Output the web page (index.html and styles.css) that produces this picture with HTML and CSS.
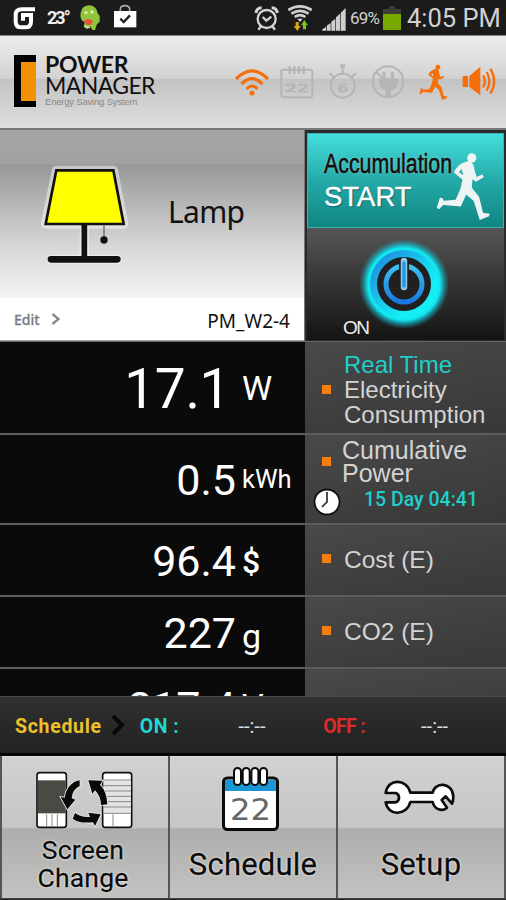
FILE: index.html
```html
<!DOCTYPE html>
<html lang="en">
<head>
    <meta charset="UTF-8">
    <meta name="viewport" content="width=device-width, initial-scale=1.0">
    <title>Power Manager</title>
    <link rel="stylesheet" href="styles.css">
</head>
<body>
    <svg width="0" height="0" class="defs">
        <symbol id="runner" viewBox="408 70 166 208">
            <circle cx="516" cy="88" r="14"/>
            <path d="M486 104L508 96Q524 104 524 124L531 145L548 137L552 146L528 160L518 152L516 178L538 205L550 253L570 256L568 264L540 275L522 218L499 198L483 234L430 230L417 243L410 238L420 207L429 210L431 217L467 214L482 180L488 153L462 132Q464 120 486 104ZM485 121L477 131L491 140Z" fill-rule="evenodd"/>
        </symbol>
    </svg>

    <div class="statusbar">
        <div class="status-left">
            <svg class="ic-sigma" width="22" height="24" viewBox="38 18 66 72" fill="none" stroke="#fff" stroke-width="12">
                <path d="M104 28H64Q46 28 46 45V65Q46 82 64 82H74Q92 82 92 65V45H68V62"/>
            </svg>
            <span class="temp">23°</span>
            <svg class="ic-droid" width="22" height="28" viewBox="238 12 66 84">
                <path d="M243 38Q247 16 270 16Q290 18 293 38L300 48V66L292 72L286 90H278L272 80L262 88L252 80L255 66Q239 60 243 38Z" fill="#8fc53c"/>
                <circle cx="259" cy="38" r="5" fill="#d9efa8"/><circle cx="277" cy="36" r="5" fill="#d9efa8"/>
                <path d="M252 62L266 56L280 62L274 74L262 76Z" fill="#e8503c"/>
                <path d="M255 78L270 84" stroke="#eee" stroke-width="4"/>
            </svg>
            <svg class="ic-bag" width="24" height="26" viewBox="338 12 72 78">
                <path d="M360 34V28Q360 17 374 17Q388 17 388 28V34" fill="none" stroke="#aaa" stroke-width="5"/>
                <path d="M341 33H408V82H341Z" fill="#fff"/>
                <path d="M360 56L370 66L389 46" fill="none" stroke="#222" stroke-width="7"/>
            </svg>
        </div>
        <div class="status-right">
            <svg width="26" height="26" viewBox="3 14 78 78" fill="none" stroke="#d4d4d4" stroke-width="7">
                <circle cx="41" cy="56" r="27"/>
                <path d="M29 50L40 61L55 49M24 78L16 88M58 78L66 88"/>
                <path d="M9 38Q11 22 26 22M73 38Q71 22 56 22" stroke-width="9"/>
            </svg>
            <svg class="ic-net" width="26" height="28" viewBox="102 10 78 84" fill="none" stroke="#cfcfcf" stroke-width="8">
                <path d="M106 28Q141 6 176 28M115 39Q141 22 167 39M125 49Q141 38 157 49"/>
                <path d="M133 54H149L141 64Z" fill="#ddd" stroke="none"/>
                <path d="M128 64H137V76H143L133 91L122 76H128Z" fill="#e0a21c" stroke="none"/>
                <path d="M150 86H159V74H165L154 58L144 74H150Z" fill="#7fc31c" stroke="none"/>
            </svg>
            <svg class="ic-signal" width="24" height="24" viewBox="206 22 72 72" fill="#cfcfcf">
                <path d="M207 93V89L218 82V93ZM220 93V78L232 70V93ZM234 93V66L246 57V93ZM248 93V53L260 42V93ZM262 93V40L277 25V93Z"/>
            </svg>
            <span class="percent">69%</span>
            <svg class="ic-battery" width="18" height="26" viewBox="0 0 18 26">
                <path d="M6 1H12V4H18V9H0V4H6Z" fill="#3b3d38"/>
                <rect y="9" width="18" height="16" fill="#76a800"/>
            </svg>
            <span class="clock">4:05 PM</span>
        </div>
    </div>

    <header>
        <div class="logo">
            <div class="logo-mark"></div>
            <div>
                <div class="logo-power">POWER</div>
                <div class="logo-manager">MANAGER</div>
                <div class="logo-sub">Energy Saving System</div>
            </div>
        </div>
        <div class="indicators">
            <svg width="36" height="38" viewBox="0 0 36 38" fill="none" stroke="#f36f0e" stroke-width="3.2">
                <path d="M2 16Q18 0 34 16M7.500 21Q18 10.500 28.500 21M12.500 26Q18 20 23.500 26"/>
                <circle cx="18" cy="30" r="2.500" fill="#f36f0e" stroke="none"/>
            </svg>
            <svg width="36" height="38" viewBox="80 189 108 114" fill="none" stroke="#b5b5b5" stroke-width="6">
                <rect x="87" y="209" width="93" height="83" rx="6"/>
                <path d="M112 199V222M126 199V222M140 199V222M154 199V222" stroke-width="7"/>
                <text x="98" y="277" textLength="72" lengthAdjust="spacingAndGlyphs" class="cal-small">22</text>
            </svg>
            <svg width="36" height="38" viewBox="214 189 108 114" fill="none" stroke="#b5b5b5" stroke-width="6">
                <circle cx="267" cy="257" r="36"/>
                <path d="M267 222V208M227 220L241 232M307 220L293 232"/>
                <path d="M260 199H274" stroke-width="12"/>
                <text x="251" y="275" textLength="34" lengthAdjust="spacingAndGlyphs" class="cal-small">6</text>
            </svg>
            <svg width="36" height="38" viewBox="348 189 108 114" fill="none" stroke="#b5b5b5" stroke-width="6">
                <circle cx="402" cy="245" r="46"/>
                <path d="M390 215V235M415 215V235" stroke-width="9"/>
                <path d="M375 235H432V249Q429 268 411 272V288H395V272Q377 266 375 249Z" fill="#b5b5b5" stroke="none"/>
                <path d="M366 215L386 234"/>
            </svg>
            <svg width="36" height="38" viewBox="0 0 36 38" fill="#f86e08">
                <use href="#runner" x="3" y="1" width="29" height="36.500"/>
            </svg>
            <svg width="36" height="38" viewBox="624 189 108 114" fill="none" stroke="#f86e08" stroke-width="7">
                <path d="M629 228H645V261H629ZM649 228L682 200V286L649 261Z" fill="#f86e08" stroke="none"/>
                <path d="M690 226Q701 244 690 262M701 216Q717 244 701 272M712 206Q735 244 712 281"/>
            </svg>
        </div>
    </header>

    <section class="device">
        <div class="device-info">
            <div class="device-name">
                <svg width="90" height="110" viewBox="120 105 270 330">
                    <path class="glow" d="M169 127H340L371 288H137ZM253 288V390M155 394H352"/>
                    <path d="M169 127H340L371 288H137Z" fill="#ff0" stroke="#111" stroke-width="8"/>
                    <path d="M253 290V392" stroke="#111" stroke-width="17"/>
                    <path d="M153 394H352" stroke="#111" stroke-width="20" stroke-linecap="round"/>
                    <path d="M312 290V330" stroke="#666" stroke-width="4"/>
                    <circle cx="312" cy="336" r="11" fill="#111"/>
                </svg>
                <span>Lamp</span>
            </div>
            <div class="device-edit">
                <span class="edit">Edit</span>
                <svg width="10" height="14" viewBox="0 0 10 14"><path d="M1.500 2L7.500 7L1.500 12" fill="none" stroke="#8b8b8b" stroke-width="2.400"/></svg>
                <span class="device-id">PM_W2-4</span>
            </div>
        </div>
        <div class="device-actions">
            <div class="accumulation">
                <div class="acc-text">
                    <div class="acc-title">Accumulation</div>
                    <div class="acc-start">START</div>
                </div>
                <svg class="acc-runner" width="55" height="69" fill="#eef4f4"><use href="#runner" width="55" height="69"/></svg>
            </div>
            <div class="power">
                <span>ON</span>
                <svg width="96" height="96" viewBox="-48 -48 96 96" fill="none">
                    <defs>
                        <radialGradient id="halo"><stop offset=".8" stop-color="#12e8f2"/><stop offset=".88" stop-color="#12cfe0" stop-opacity=".6"/><stop offset="1" stop-color="#12aebc" stop-opacity="0"/></radialGradient>
                        <linearGradient id="ring" x1="0" y1="0" x2="1" y2="1"><stop offset=".1" stop-color="#1f8fe0"/><stop offset=".7" stop-color="#16eef5"/></linearGradient>
                        <linearGradient id="inner" x1="0" y1="0" x2="0" y2="1"><stop offset="0" stop-color="#3bc2ee"/><stop offset="1" stop-color="#1979e0"/></linearGradient>
                    </defs>
                    <circle r="45" fill="url(#halo)"/>
                    <circle r="34" fill="url(#ring)"/>
                    <circle r="27" fill="#211f20"/>
                    <circle r="18" stroke="url(#inner)" stroke-width="5"/>
                    <path d="M0 -23V3" stroke="#211f20" stroke-width="10"/>
                    <path d="M0 -23V3" stroke="#8ccbe8" stroke-width="6.500" stroke-linecap="round"/>
                    <path d="M0 -21V2" stroke="#239ae6" stroke-width="3.500" stroke-linecap="round"/>
                </svg>
            </div>
        </div>
    </section>

    <section class="readings">
        <div class="row row-power">
            <div class="value"><b>17.1</b><i>W</i></div>
            <div class="label"><span><em>Real Time</em><br>Electricity<br>Consumption</span></div>
        </div>
        <div class="row row-energy">
            <div class="value"><b>0.5</b><i>kWh</i></div>
            <div class="label">
                <span>Cumulative<br>Power</span>
                <div class="elapsed">
                    <svg width="28" height="28" viewBox="0 0 28 28">
                        <circle cx="14" cy="14" r="12.500" fill="#fff" stroke="#111" stroke-width="1.800"/>
                        <path d="M14 4V14L9 19" fill="none" stroke="#222" stroke-width="1.600"/>
                    </svg>
                    <span>15 Day 04:41</span>
                </div>
            </div>
        </div>
        <div class="row row-cost">
            <div class="value"><b>96.4</b><i>$</i></div>
            <div class="label"><span>Cost (E)</span></div>
        </div>
        <div class="row">
            <div class="value"><b>227</b><i>g</i></div>
            <div class="label"><span>CO2 (E)</span></div>
        </div>
        <div class="row row-volt">
            <div class="value"><b>217.4</b><i>V</i></div>
            <div class="label"></div>
        </div>
    </section>

    <div class="schedule">
        <span class="sch-title">Schedule</span>
        <svg width="16" height="22" viewBox="0 0 16 22"><path d="M2 2L11 11L2 20" fill="none" stroke="#090909" stroke-width="4"/></svg>
        <span class="sch-on">ON :</span>
        <span class="sch-time">--:--</span>
        <span class="sch-off">OFF :</span>
        <span class="sch-time">--:--</span>
    </div>

    <nav>
        <a href="#" class="two-line">
            <svg width="98" height="58" viewBox="110 64 294 174">
                <g stroke="#111" stroke-width="5">
                    <rect x="113" y="69" width="88" height="164" rx="8" fill="#fff"/>
                    <rect x="310" y="69" width="87" height="164" rx="8" fill="#fff"/>
                </g>
                <path d="M116 92H199V191H116Z" fill="#484b43"/>
                <path d="M142 194V230M158 194V230M174 194V230M341 194V230" stroke="#888" stroke-width="3"/>
                <path d="M313 92H395V191H313Z" fill="#e4e4e4"/>
                <path d="M313 91H395M313 108H395M313 124H395M313 140H395M313 156H395M313 172H395M313 191H395" stroke="#888" stroke-width="3"/>
                <g fill="#090909" stroke="#eceadb" stroke-width="5" paint-order="stroke">
                    <path d="M241 92V109Q220 119 217 145L228 150L204 179L184 142L196 144Q203 100 241 92Z"/>
                    <path d="M267 92L310 93L302 105Q323 126 324 164L305 166Q304 139 287 122L279 132Z"/>
                    <path d="M227 190Q246 204 272 202L267 189L304 194L287 229L281 218Q239 222 220 207Z"/>
                </g>
            </svg>
            <span>Screen<br>Change</span>
        </a>
        <a href="#">
            <svg width="60" height="66" viewBox="0 0 60 66">
                <rect x="2.500" y="11" width="54" height="51.500" rx="4" fill="#fff" stroke="#0b0b0b" stroke-width="3"/>
                <path d="M4 13H55V24H4Z" fill="#1b96d4"/>
                <g fill="#fff" stroke="#0b0b0b" stroke-width="2"><rect x="13" y="1" width="7" height="17" rx="3.500"/><rect x="21.700" y="1" width="7" height="17" rx="3.500"/><rect x="30.400" y="1" width="7" height="17" rx="3.500"/><rect x="39" y="1" width="7" height="17" rx="3.500"/></g>
                <text x="9" y="53" textLength="41" lengthAdjust="spacingAndGlyphs" class="cal-big">22</text>
            </svg>
            <span>Schedule</span>
        </a>
        <a href="#">
            <svg width="74" height="38" viewBox="390 88 222 114">
                <path d="M401 130C408 85 464 86 475 129H542C548 96 602 96 604 141Q604 152 600 162L581 140L569 151L585 174C570 187 547 180 542 157H475C464 200 408 200 401 158H431Q441 154 441 144Q441 133 431 130Z" fill="#fff" stroke="#0b0b0b" stroke-width="8" stroke-linejoin="round"/>
            </svg>
            <span>Setup</span>
        </a>
    </nav>
</body>
</html>
```
FILE: styles.css
```css
* {
    box-sizing: border-box;
}
body {
    margin: 0;
    width: 506px;
    height: 900px;
    overflow: hidden;
    background-color: #2b2b2b;
    font-family: Roboto, sans-serif;
    display: flex;
    flex-direction: column;
}
svg {
    display: block;
    flex-shrink: 0;
}
.defs {
    position: absolute;
}

/* status bar */
.statusbar {
    height: 35px;
    background-color: #1b1b1b;
    color: #d2d2d2;
    display: flex;
    justify-content: space-between;
    padding: 0 5px 0 13px;
}
.status-left, .status-right {
    display: flex;
    align-items: center;
}
.temp {
    width: 20px;
    margin-left: 12px;
    font-size: 18px;
    font-weight: bold;
    letter-spacing: -2px;
    color: #eee;
}
.ic-droid {
    margin-left: 12px;
}
.ic-bag {
    margin: 0 0 2px 12px;
}
.ic-net {
    margin-left: 7px;
}
.ic-signal {
    margin: 3px 0 0 9px;
}
.percent {
    margin: 0 2px 0 4px;
    width: 31px;
    font-size: 17px;
    letter-spacing: -0.8px;
}
.ic-battery {
    margin-top: 1px;
}
.clock {
    margin-left: 6px;
    width: 94px;
    font-size: 25.5px;
    white-space: nowrap;
}

/* header */
header {
    height: 95px;
    padding: 18px 9px 0 14px;
    border-top: 1px solid #888;
    border-bottom: 2px solid #777;
    background: linear-gradient(#ececec 0, #d2d2d2 46%, #c3c3c3 47%, #dedede 100%);
    display: flex;
    justify-content: space-between;
}
.logo {
    display: flex;
    gap: 9px;
}
.logo-mark {
    width: 22px;
    height: 52px;
    margin-top: 1px;
    background-color: #f39200;
    border: solid #000;
    border-width: 7px 0 6px 7px;
}
.logo-power, .logo-manager {
    font-family: Lato, sans-serif;
    font-size: 23px;
    line-height: 21px;
    color: #111;
}
.logo-power {
    font-weight: bold;
    letter-spacing: -0.3px;
}
.logo-manager {
    letter-spacing: -0.6px;
}
.logo-sub {
    font-family: "Liberation Sans", sans-serif;
    font-size: 9.5px;
    line-height: 11px;
    letter-spacing: -0.2px;
    color: #888;
}
.indicators {
    display: flex;
    gap: 9.4px;
    padding-top: 9px;
}
.cal-small {
    font: 34px "DejaVu Sans", sans-serif;
    fill: #b5b5b5;
    stroke-width: 2;
}

/* device */
.device {
    height: 211px;
    display: flex;
    background-color: #2a2a2a;
}
.device-info {
    width: 305px;
    border-right: 1px solid #777;
}
.device-name {
    height: 168px;
    padding: 33px 0 0 40px;
    background: linear-gradient(#a5a5a5 0, #a1a1a1 20%, #979797 21%, #b5b5b5 43%, #d8d8d8 70%, #f3f3f3 100%);
    display: flex;
    font-family: "Noto Sans", sans-serif;
    font-size: 30px;
    line-height: 40px;
    color: #111;
}
.device-name span {
    margin: 29px 0 0 38px;
    letter-spacing: -0.7px;
}
.glow {
    fill: none;
    stroke: #fff;
    stroke-opacity: 0.45;
    stroke-width: 28px;
    stroke-linejoin: round;
    stroke-linecap: round;
}
.device-edit {
    height: 43px;
    padding: 0 14px;
    background-color: #fff;
    border-bottom: 1px solid #aaa;
    display: flex;
    align-items: center;
    font-family: "Noto Sans", sans-serif;
}
.edit {
    width: 37px;
    font-size: 14px;
    color: #777d85;
    font-weight: 500;
    -webkit-text-stroke: 0.3px #777d85;
}
.device-id {
    margin-left: auto;
    margin-top: 3px;
    font-size: 19px;
    color: #111;
}
.device-actions {
    width: 201px;
    padding: 3px 2px 0;
}
.accumulation {
    height: 95px;
    padding: 17px 0 0 16px;
    border: 1px solid #35b5b2;
    background: linear-gradient(#45dfdc, #23aaa8 50%, #118683);
    position: relative;
    font-family: "Liberation Sans", sans-serif;
}
.acc-title {
    font-size: 27px;
    line-height: 27px;
    width: 163px;
    color: #111;
    -webkit-text-stroke: 0.7px #111;
    text-shadow: 0 0 2px #d8ffff;
    transform: scaleX(0.79);
    transform-origin: left;
}
.acc-start {
    margin-top: 5px;
    font-size: 27.5px;
    line-height: 27px;
    color: #fff;
    -webkit-text-stroke: 0.4px #fff;
    text-shadow: 1px 1px 1px #055;
}
.acc-runner {
    position: absolute;
    left: 128px;
    top: 18px;
}
.power {
    height: 112px;
    background: linear-gradient(#565656, #343434 50%, #141414);
    display: flex;
    align-items: center;
    justify-content: center;
    position: relative;
}
.power span {
    position: absolute;
    left: 36px;
    bottom: 1px;
    font-family: "Liberation Sans", sans-serif;
    font-size: 19px;
    letter-spacing: -1.5px;
    color: #eee;
    z-index: 1;
}
.power svg {
    margin-left: -3px;
}

/* readings */
.readings {
    height: 355px;
    overflow: hidden;
    border-top: 1px solid #666;
}
.row {
    height: 72px;
    display: flex;
    border-bottom: 2px solid #5d5d5d;
}
.row-power {
    height: 93px;
}
.row-energy {
    height: 90px;
}
.value {
    width: 305px;
    background-color: #0a0a0a;
    color: #fff;
    display: flex;
    align-items: baseline;
    line-height: 73px;
}
.value b {
    width: 236px;
    font-size: 43px;
    font-weight: 400;
    text-align: right;
}
.value i {
    margin-left: 6px;
    font-size: 34px;
    font-style: normal;
}
.row-power .value {
    line-height: 95px;
}
.row-power .value b {
    width: 230px;
    font-size: 55px;
    letter-spacing: -0.4px;
}
.row-power .value i {
    margin-left: 12px;
    position: relative;
    top: -8px;
}
.row-energy .value {
    line-height: 91px;
}
.row-energy .value i {
    font-size: 25.5px;
    position: relative;
    top: -7px;
}
.row-cost .value i {
    font-size: 32px;
    font-weight: 500;
    position: relative;
    top: -3px;
}
.row-volt .value {
    line-height: 77px;
}
.row-volt .value i {
    position: relative;
    top: -4px;
}
.label {
    flex: 1;
    padding-left: 39px;
    background: linear-gradient(170deg, #494949, #383838);
    color: #d3d3d3;
    font-family: "Liberation Sans", sans-serif;
    font-size: 24.5px;
    line-height: 69px;
    position: relative;
}
.label em {
    font-style: normal;
    color: #20cfcb;
}
.label::before {
    content: "";
    position: absolute;
    left: 17px;
    top: 29px;
    width: 9px;
    height: 9px;
    background-color: #f77f0b;
}
.row-power .label {
    padding-top: 10px;
    font-size: 24px;
    line-height: 25px;
}
.row-power .label::before {
    top: 43px;
}
.row-energy .label {
    padding: 4px 0 0 37px;
    font-size: 25px;
    line-height: 23px;
}
.row-energy .label::before {
    top: 22px;
}
.row-volt .label::before {
    display: none;
}
.elapsed {
    display: flex;
    align-items: center;
    margin: 3px 0 0 -29px;
    font-family: Roboto, sans-serif;
    font-size: 19.5px;
    font-weight: 500;
    color: #20cfcb;
}
.elapsed span {
    margin: -6px 0 0 23px;
}

/* schedule */
.schedule {
    height: 60px;
    padding: 0 0 0 15px;
    background: linear-gradient(#303030, #222);
    border-top: 1px solid #4c4c4c;
    border-bottom: 3px solid #050505;
    display: flex;
    align-items: center;
    font-size: 19.5px;
    font-weight: bold;
}
.sch-title {
    width: 97px;
    padding-top: 2px;
    letter-spacing: 0.7px;
    color: #ecc12c;
}
.sch-on {
    width: 100px;
    margin-left: 13px;
    padding-top: 2px;
    letter-spacing: 0.5px;
    color: #20d8d0;
}
.sch-off {
    width: 99px;
    padding-top: 2px;
    letter-spacing: -0.7px;
    color: #df2a2c;
}
.sch-time {
    width: 86px;
    padding-top: 2px;
    font-weight: 400;
    font-size: 20px;
    color: #ddd;
}

/* bottom menu */
nav {
    height: 143px;
    display: flex;
    padding: 0 2px;
    background-color: #555;
    gap: 2px;
    border-bottom: 1px solid #444;
}
nav a {
    flex: 1;
    display: flex;
    flex-direction: column;
    align-items: center;
    text-decoration: none;
    color: #0c0c0c;
    font-size: 31px;
    line-height: 36px;
    text-align: center;
    text-shadow: 0 0 2px #fff, 0 0 2px #fff;
    background: linear-gradient(#d1d1d1 0, #c6c6c6 50%, #adaeac 51%, #c3c4c1 100%);
    border-top: 1px solid #e0e0e0;
}
nav a svg {
    margin-top: 10px;
    margin-right: 4px;
}
nav a span {
    margin-top: 14px;
    letter-spacing: 0.2px;
    -webkit-text-stroke: 0.3px #0c0c0c;
}
nav a:last-child svg {
    margin-top: 22px;
}
nav a:last-child span {
    margin-top: 30px;
}
nav .two-line {
    font-size: 26.5px;
    line-height: 28px;
}
nav .two-line svg {
    margin-top: 14px;
    margin-right: 0;
}
nav .two-line span {
    margin: 7px 4px 0 0;
}
.cal-big {
    font: 30px "DejaVu Sans", sans-serif;
    fill: #666;
}
```
